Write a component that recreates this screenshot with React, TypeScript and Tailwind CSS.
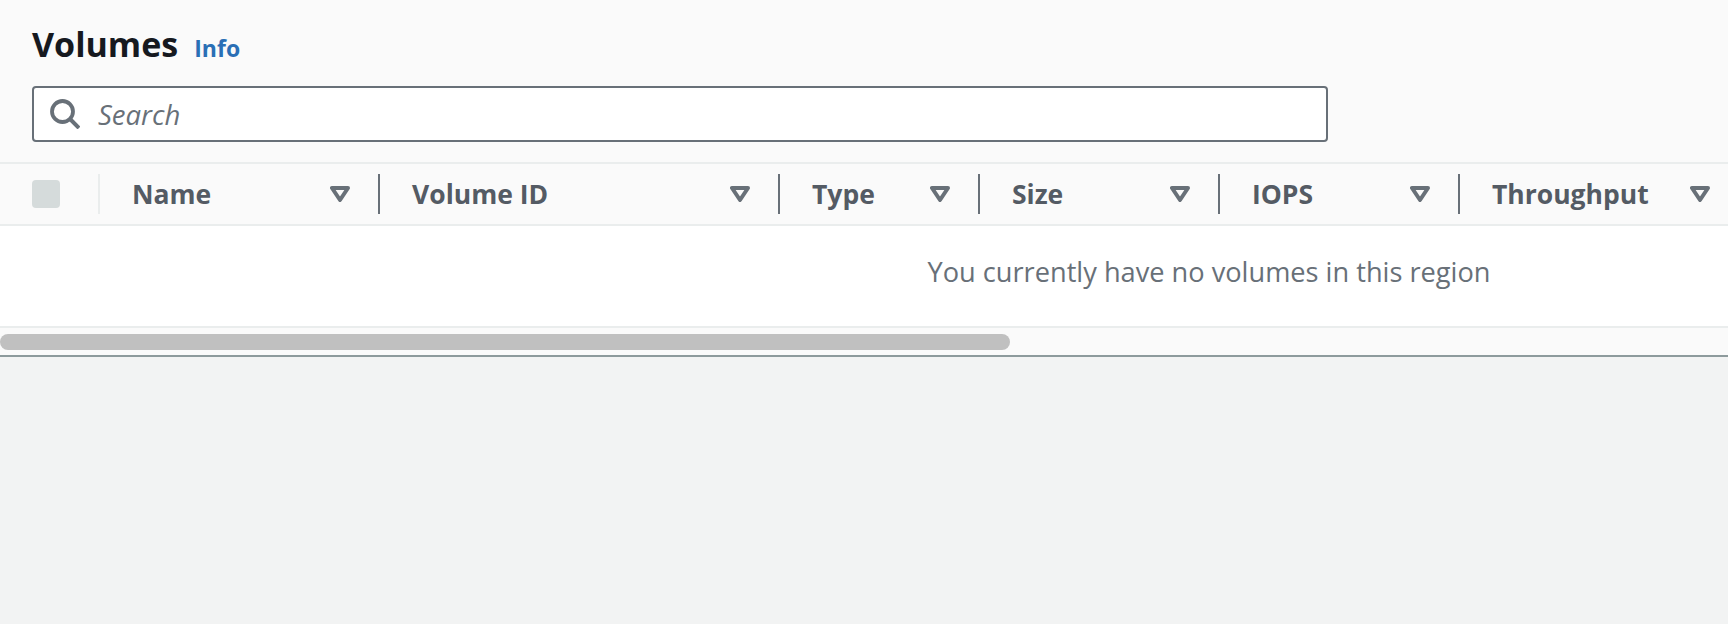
import React from 'react';

const columns = [
  { label: 'Name', width: 'w-[280px]' },
  { label: 'Volume ID', width: 'w-[400px]' },
  { label: 'Type', width: 'w-[200px]' },
  { label: 'Size', width: 'w-[240px]' },
  { label: 'IOPS', width: 'w-[240px]' },
  { label: 'Throughput', width: 'w-[280px]' },
];

const Caret = () => (
  <svg width="20" height="16" viewBox="0 0 20 16" fill="none" className="shrink-0">
    <path d="M2 2H18L10 14Z" stroke="#687078" strokeWidth="4" strokeLinejoin="round" />
  </svg>
);

const SearchIcon = () => (
  <svg width="30" height="30" viewBox="0 0 30 30" fill="none" className="shrink-0">
    <circle cx="12.5" cy="12.5" r="10.5" stroke="#687078" strokeWidth="3.8" />
    <path d="M20 20L29 29" stroke="#687078" strokeWidth="4" />
  </svg>
);

export default function App() {
  return (
    <div className="min-h-[624px] bg-[#f2f3f3] font-['Open_Sans','Liberation_Sans',sans-serif] overflow-hidden">
      <div className="bg-[#fafafa] border-b-2 border-[#8d9a9c]">
        <div className="px-8 pt-[25px] pb-5 border-b-2 border-[#eaeded]">
          <div className="flex items-baseline gap-4 h-[38px]">
            <h1 className="text-[34px] leading-[38px] font-bold text-[#16191f]">Volumes</h1>
            <a className="text-[23px] font-bold text-[#2a6fb5]">Info</a>
          </div>
          <div className="mt-[23px] w-[1296px] h-[56px] flex items-center gap-[18px] pl-[16px] bg-white border-2 border-[#687078] rounded-[4px]">
            <SearchIcon />
            <span className="text-[27.5px] italic text-[#687078] translate-y-px">Search</span>
          </div>
        </div>

        <div className="overflow-hidden">
          <div className="w-[2418px]">
            <div className="flex h-[62px] items-center border-b-2 border-[#eaeded]">
              <div className="w-[100px] h-10 pl-8 flex items-center border-r-2 border-[#eaeded]">
                <div className="w-7 h-7 rounded-[4px] bg-[#d5dbdb]" />
              </div>
              {columns.map((col) => (
                <div
                  key={col.label}
                  className={`${col.width} h-10 pl-8 pr-[28px] flex items-center justify-between border-r-2 border-[#687078]`}
                >
                  <span className="text-[26.5px] font-bold text-[#545b64] translate-y-px">{col.label}</span>
                  <Caret />
                </div>
              ))}
            </div>
            <div className="h-[102px] pb-2 bg-white flex items-center justify-center border-b-2 border-[#eaeded]">
              <span className="text-[27.2px] text-[#687078]">You currently have no volumes in this region</span>
            </div>
          </div>
        </div>

        <div className="h-[27px] pt-[6px]">
          <div className="w-[1010px] h-4 rounded-full bg-[#c0c0c0]" />
        </div>
      </div>
    </div>
  );
}
